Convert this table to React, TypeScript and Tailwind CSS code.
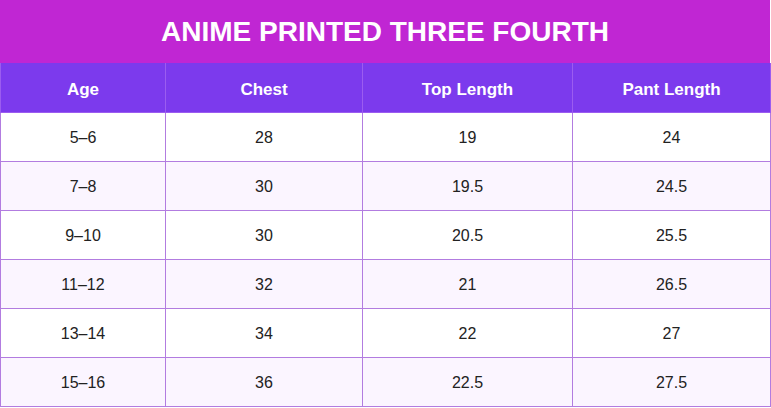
const rows = [
  ["5–6", "28", "19", "24"],
  ["7–8", "30", "19.5", "24.5"],
  ["9–10", "30", "20.5", "25.5"],
  ["11–12", "32", "21", "26.5"],
  ["13–14", "34", "22", "27"],
  ["15–16", "36", "22.5", "27.5"],
];

const heads = ["Age", "Chest", "Top Length", "Pant Length"];

export default function App() {
  return (
    <div className="w-[771px] h-[408px] bg-white font-['Liberation_Sans',Arial,sans-serif]">
      <div className="w-[770px]">
        <div className="h-[63px] bg-[#c026d3] flex items-center justify-center">
          <h1 className="text-white font-bold text-[28px] leading-none">
            ANIME PRINTED THREE FOURTH
          </h1>
        </div>
        <table className="w-[770px] border-collapse table-fixed">
          <colgroup>
            <col className="w-[165px]" />
            <col className="w-[197px]" />
            <col className="w-[210px]" />
            <col className="w-[198px]" />
          </colgroup>
          <thead>
            <tr className="h-[49px] bg-[#7c3aed]">
              {heads.map((h) => (
                <th
                  key={h}
                  className="border border-[#9b5cf0] border-t-0 pt-[4px] text-white font-bold text-[17px] text-center"
                >
                  {h}
                </th>
              ))}
            </tr>
          </thead>
          <tbody>
            {rows.map((r, i) => (
              <tr key={i} className={`h-[49px] ${i % 2 === 1 ? "bg-[#fbf5ff]" : "bg-white"}`}>
                {r.map((c, j) => (
                  <td
                    key={j}
                    className="border border-[#b27ce0] pt-[3px] text-center text-[16px] text-[#222]"
                  >
                    {c}
                  </td>
                ))}
              </tr>
            ))}
          </tbody>
        </table>
      </div>
    </div>
  );
}
